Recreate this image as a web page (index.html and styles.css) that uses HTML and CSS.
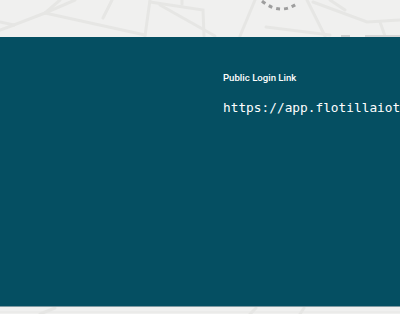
FILE: index.html
```html
<!DOCTYPE html>
<html lang="en">
<head>
  <meta charset="UTF-8" />
  <meta name="viewport" content="width=device-width, initial-scale=1.0" />
  <title>Public Login Link</title>
  <link rel="stylesheet" href="styles.css">
</head>
<body>
  <!-- map background -->
  <svg class="map" width="400" height="314" viewBox="0 0 400 314">
    <g stroke="#e6e6e4" stroke-width="3" fill="none" stroke-linecap="round">
      <path d="M0 22 L14 25 L45 13 L75 0" />
      <path d="M14 25 L0 30" />
      <path d="M45 13 L145 35" />
      <path d="M60 0 L45 13" />
      <path d="M150 0 L145 36" />
      <path d="M103 18 L112 0" />
      <path d="M150 2 L203 10 L204 36" />
      <path d="M160 5 L215 36" />
      <path d="M182 0 L182 4" />
      <path d="M255 0 L240 36" />
      <path d="M266 27 L330 35" />
      <path d="M307 0 L325 36" />
      <path d="M313 2 L367 22 L400 20" />
      <path d="M380 22 L385 36" />
      <path d="M330 0 L345 10" />
      <path d="M0 312 L400 312" stroke-width="1" />
      <path d="M40 314 L55 308" />
      <path d="M250 314 L256 308" />
      <path d="M300 314 L304 308" />
    </g>
    <path d="M262 1 Q280 16 298 3" stroke="#9e9e9e" stroke-width="3" fill="none" stroke-dasharray="4 4" />
    <rect x="341" y="35" width="9" height="2" fill="#cfcfcf" />
    <rect x="365" y="35" width="35" height="2" fill="#d6d6d6" />
  </svg>

  <div class="panel">
    <div class="share">
      <div class="label">Public Login Link</div>
      <div class="link">https://app.flotillaiot.com/login/public</div>
    </div>
  </div>
</body>
</html>
```

FILE: styles.css
```css
* {
  margin: 0;
  padding: 0;
  box-sizing: border-box;
}

body {
  width: 400px;
  height: 314px;
  background: #f0f0ef;
  overflow: hidden;
  position: relative;
  font-family: Roboto, 'Liberation Sans', sans-serif;
  padding-top: 37px;
}

.map {
  position: absolute;
  top: 0;
  left: 0;
}

.panel {
  position: relative;
  height: 270px;
  background: #054f62;
  border-bottom: 1px solid #7e9aa2;
  padding: 35px 0 0 223px;
  overflow: hidden;
}

.share {
  white-space: nowrap;
}

.label {
  color: #ffffff;
  font-size: 9.6px;
  font-weight: 500;
  line-height: 12px;
}

.link {
  margin-top: 16px;
  color: #ffffff;
  font-family: 'DejaVu Sans Mono', monospace;
  font-size: 12.8px;
  line-height: 15px;
}
```
